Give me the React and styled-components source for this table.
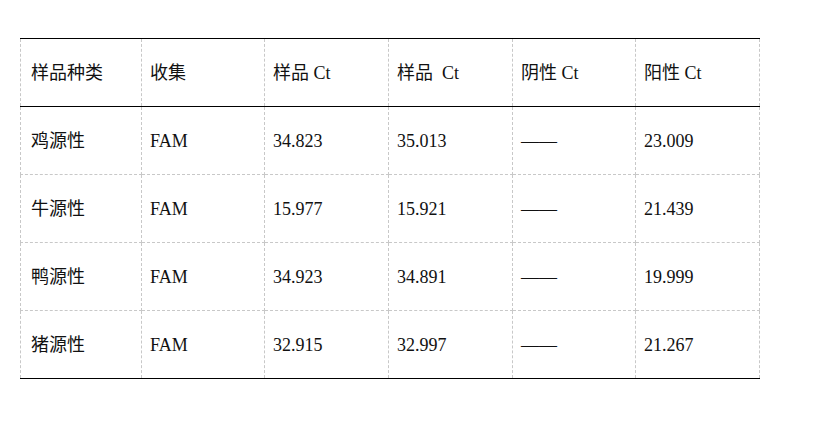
import React from "react";
import styled, { createGlobalStyle } from "styled-components";

const GlobalStyle = createGlobalStyle`
  body {
    margin: 0;
    background: #fff;
  }
`;

const Page = styled.div`
  padding: 38px 0 0 20px;
`;

const Table = styled.table`
  width: 739px;
  border-collapse: collapse;
  table-layout: fixed;
  font-family: "Liberation Serif", "Noto Sans CJK SC", serif;
  font-size: 18px;
  line-height: 22px;
  color: #111;
  border-top: 1px solid #000;
  border-bottom: 1px solid #000;
`;

const Col = styled.col`
  width: ${(p) => p.$w}px;
`;

const HeadRow = styled.tr`
  border-bottom: 1px solid #000;
`;

const Cell = styled.td`
  height: 67px;
  padding: 0 0 0 ${(p) => (p.$first ? 10 : 8)}px;
  vertical-align: middle;
  white-space: pre;
  border-left: 1px dashed #c8c8c8;
  border-right: 1px dashed #c8c8c8;
  border-bottom: 1px dashed #c8c8c8;
  font-weight: normal;
  text-align: left;
`;

const HeadCell = styled(Cell).attrs({ as: "th" })`
  border-bottom: 1px solid #000;
`;

const widths = [121, 123, 124, 124, 123, 124];

const headers = ["样品种类", "收集", "样品 Ct", "样品  Ct", "阴性 Ct", "阳性 Ct"];

const rows = [
  ["鸡源性", "FAM", "34.823", "35.013", "——", "23.009"],
  ["牛源性", "FAM", "15.977", "15.921", "——", "21.439"],
  ["鸭源性", "FAM", "34.923", "34.891", "——", "19.999"],
  ["猪源性", "FAM", "32.915", "32.997", "——", "21.267"],
];

export default function App() {
  return (
    <Page>
      <GlobalStyle />
      <Table>
        <colgroup>
          {widths.map((w, i) => (
            <Col key={i} $w={w} />
          ))}
        </colgroup>
        <thead>
          <HeadRow>
            {headers.map((h, i) => (
              <HeadCell key={i} $first={i === 0}>
                {h}
              </HeadCell>
            ))}
          </HeadRow>
        </thead>
        <tbody>
          {rows.map((r, i) => (
            <tr key={i}>
              {r.map((c, j) => (
                <Cell key={j} $first={j === 0}>
                  {c}
                </Cell>
              ))}
            </tr>
          ))}
        </tbody>
      </Table>
    </Page>
  );
}
